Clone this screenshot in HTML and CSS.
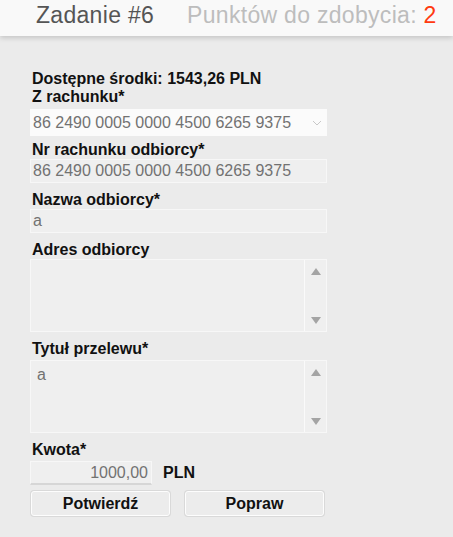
FILE: index.html
```html
<!DOCTYPE html>
<html lang="pl">
<head>
<meta charset="utf-8">
<link rel="stylesheet" href="styles.css">
</head>
<body>
<header class="topbar">
  <span class="task">Zadanie #6</span>
  <span class="points">Punktów do zdobycia: <span class="num">2</span></span>
</header>
<main class="form">
  <div class="label">Dostępne środki: 1543,26 PLN</div>
  <div class="label">Z rachunku*</div>
  <div class="select">
    <span>86 2490 0005 0000 4500 6265 9375</span>
    <svg class="chev" width="10" height="6" viewBox="0 0 10 6"><path d="M1 1 L5 5 L9 1" fill="none" stroke="#c8c8c8" stroke-width="1"/></svg>
  </div>
  <div class="label">Nr rachunku odbiorcy*</div>
  <div class="input">86 2490 0005 0000 4500 6265 9375</div>
  <div class="label">Nazwa odbiorcy*</div>
  <div class="input">a</div>
  <div class="label">Adres odbiorcy</div>
  <div class="textarea">
    <div class="ta-text"></div>
    <div class="scroll">
      <span class="tri up"></span>
      <span class="tri down"></span>
    </div>
  </div>
  <div class="label lab-gap">Tytuł przelewu*</div>
  <div class="textarea">
    <div class="ta-text">a</div>
    <div class="scroll">
      <span class="tri up"></span>
      <span class="tri down"></span>
    </div>
  </div>
  <div class="label lab-gap">Kwota*</div>
  <div class="amount-row">
    <div class="input amount">1000,00</div>
    <span class="cur">PLN</span>
  </div>
  <div class="buttons">
    <button class="btn">Potwierdź</button>
    <button class="btn">Popraw</button>
  </div>
</main>
</body>
</html>
```

FILE: styles.css
```css
html, body {
  margin: 0;
  padding: 0;
}
body {
  background: #ebebeb;
  font-family: "Liberation Sans", Arial, sans-serif;
  width: 453px;
  height: 537px;
  overflow: hidden;
}
.topbar {
  height: 36px;
  background: #f9f9f9;
  box-shadow: 0 2px 5px rgba(0, 0, 0, 0.16);
  display: flex;
  align-items: flex-start;
  padding-left: 36px;
  font-size: 23px;
  letter-spacing: 0.3px;
  line-height: 23px;
  padding-top: 4px;
  box-sizing: border-box;
  gap: 33px;
}
.task {
  color: #555;
}
.points {
  color: #bdbdbd;
}
.num {
  color: #ff3a10;
}
.form {
  padding: 34px 0 0 30px;
  width: 297px;
  display: flex;
  flex-direction: column;
}
.label {
  font-weight: bold;
  font-size: 16px;
  line-height: 18px;
  color: #111;
  padding-left: 2px;
}
.lab-gap {
  margin-bottom: 2px;
}
.select {
  margin-top: 3px;
  height: 27px;
  background: #fbfbfb;
  box-sizing: border-box;
  display: flex;
  align-items: center;
  justify-content: space-between;
  padding: 0 5px 0 3px;
  font-size: 16px;
  color: #727272;
  margin-bottom: 5px;
}
.input {
  height: 24px;
  box-sizing: border-box;
  background: #efefef;
  border: 1px solid #f7f7f7;
  font-size: 16px;
  line-height: 22px;
  color: #727272;
  padding-left: 2px;
  margin-bottom: 8px;
}
.textarea {
  height: 73px;
  box-sizing: border-box;
  background: #efefef;
  border: 1px solid #f7f7f7;
  display: flex;
  margin-bottom: 8px;
}
.ta-text {
  flex: 1;
  font-size: 16px;
  line-height: 18px;
  color: #727272;
  padding: 5px 0 0 6px;
}
.scroll {
  width: 21px;
  border-left: 1px solid #fafafa;
  display: flex;
  flex-direction: column;
  justify-content: space-between;
  align-items: center;
  padding: 8px 0 7px;
}
.tri {
  width: 0;
  height: 0;
  border-left: 5px solid transparent;
  border-right: 5px solid transparent;
}
.tri.up {
  border-bottom: 7px solid #a4a4a4;
}
.tri.down {
  border-top: 7px solid #a4a4a4;
}
.amount-row {
  display: flex;
  align-items: center;
  gap: 11px;
}
.amount {
  width: 122px;
  text-align: right;
  padding-right: 3px;
  margin-bottom: 0;
  border-bottom: 2px solid #d6d6d6;
}
.cur {
  font-weight: bold;
  font-size: 16px;
  color: #111;
}
.buttons {
  display: flex;
  gap: 15px;
  margin-top: 6px;
  padding-left: 1px;
}
.btn {
  width: 139px;
  height: 25px;
  background: #ececec;
  border: 1px solid #fdfdfd;
  border-radius: 3px;
  box-shadow: 0 0 0 1px #d9d9d9;
  font-family: "Liberation Sans", Arial, sans-serif;
  font-weight: bold;
  font-size: 16px;
  color: #111;
  padding: 0;
  line-height: 22px;
}
```
